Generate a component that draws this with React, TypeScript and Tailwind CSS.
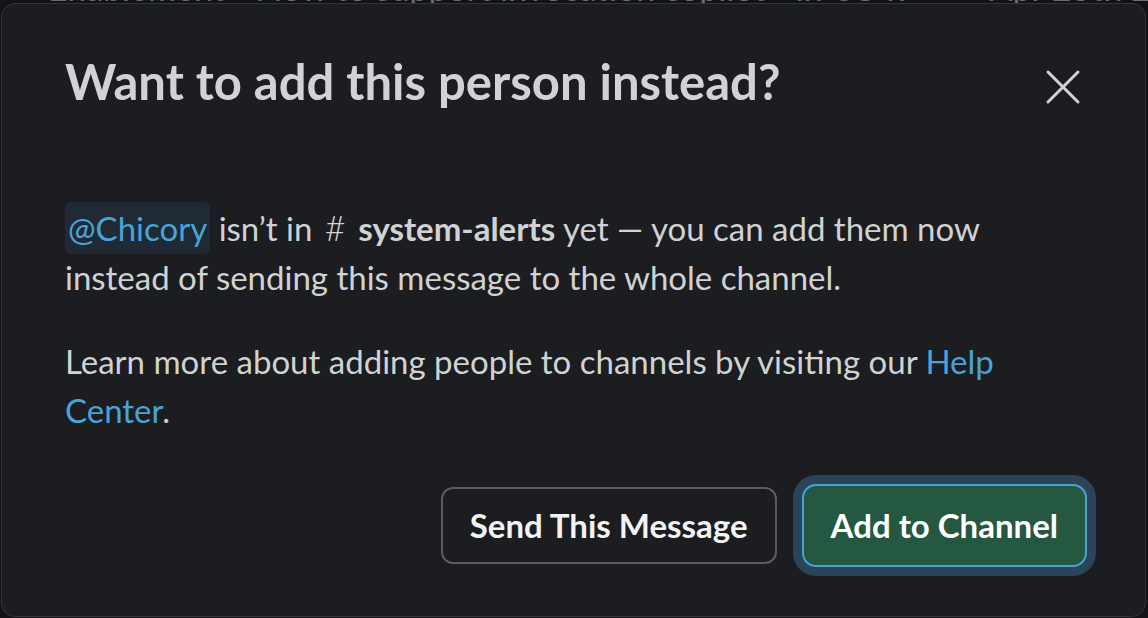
import { X } from "lucide-react";

export default function App() {
  return (
    <div className="relative h-[618px] w-[1148px] overflow-hidden bg-[#121316] font-['Lato',sans-serif]">
      {/* backdrop: channel header peeking out behind the modal */}
      <div className="-mt-[30px] whitespace-nowrap pl-[48px] text-[34px] leading-[36px] text-[#6b6c6f]">
        Enablement - Flow to support invocation copilot - in US w
        <span className="ml-[80px]">Apr 25th 2024</span>
      </div>

      <div className="absolute left-[1px] top-[3px] flex h-[614px] w-[1145px] flex-col rounded-[14px] border border-[#34353a] bg-[#1b1d21] pb-[49px] pl-[63px] pr-[58px] pt-[45px]">
        <div className="flex items-start justify-between">
          <h1 className="text-[49px] font-bold leading-[64px] text-[#d1d2d3]">
            Want to add this person instead?
          </h1>
          <button className="-mr-[6px] mt-[8px] flex h-[60px] w-[60px] items-center justify-center text-[#d1d2d3]">
            <X size={60} strokeWidth={1.2} />
          </button>
        </div>

        <p className="mt-[86px] pr-[10px] text-[33px] leading-[49px] text-[#d1d2d3]">
          <span className="rounded-[6px] bg-[#1f2a35] px-[3px] py-[6px] text-[#4aa3d6]">@Chicory</span>{" "}
          isn’t in <span className="mx-[4px] text-[36px] font-light">#</span>{" "}
          <span className="font-bold">system-alerts</span> yet — you can add them now instead of sending this
          message to the whole channel.
        </p>

        <p className="mt-[35px] text-[33px] leading-[49px] text-[#d1d2d3]">
          Learn more about adding people to channels by visiting our{" "}
          <span className="text-[#4aa3d6]">Help Center</span>.
        </p>

        <div className="mt-auto flex items-center justify-end gap-[25px]">
          <button className="h-[77px] rounded-[12px] border-2 border-[#5b5c60] px-[27px] text-[33px] font-bold text-[#f3f3f3]">
            Send This Message
          </button>
          <button className="h-[83px] rounded-[14px] border-2 border-[#4aa1d9] bg-[#245840] px-[27px] text-[33px] font-bold text-white shadow-[0_0_0_9px_#2c4457]">
            Add to Channel
          </button>
        </div>
      </div>
    </div>
  );
}
